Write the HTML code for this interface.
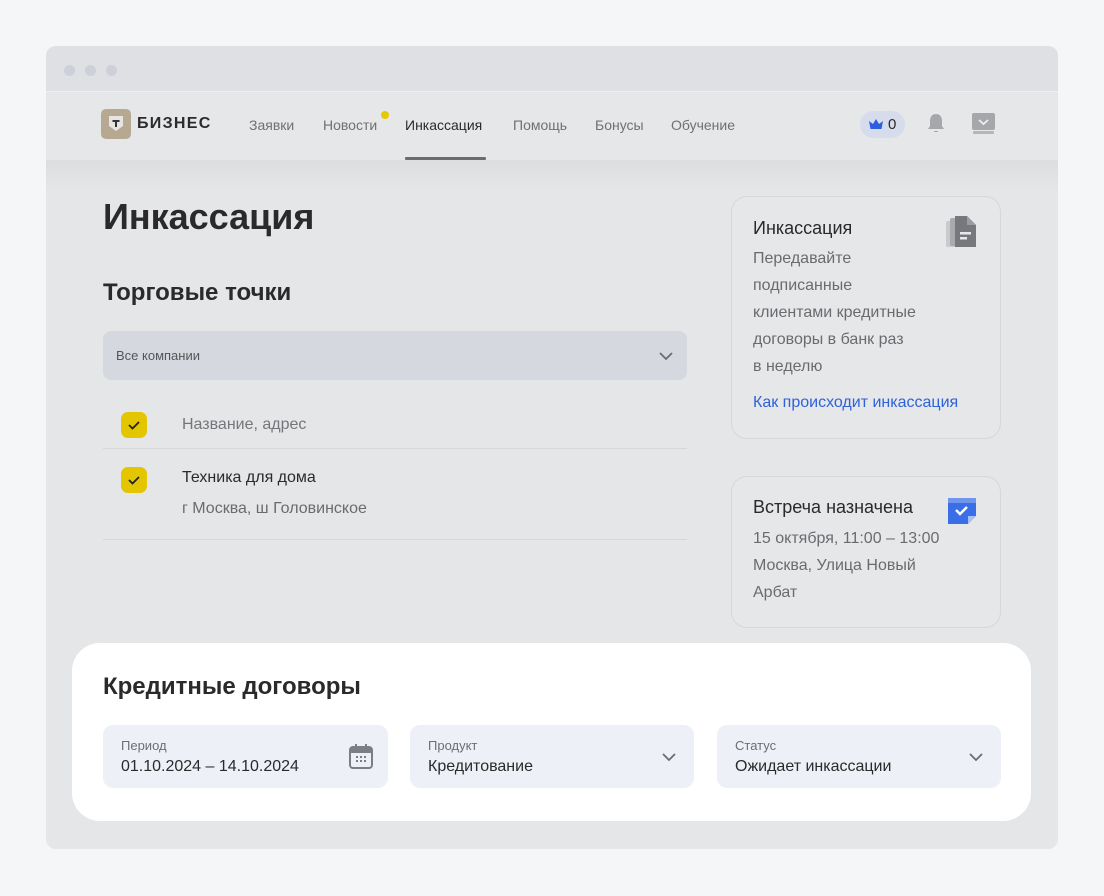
<!DOCTYPE html>
<html><head><meta charset="utf-8"><style>
*{margin:0;padding:0;box-sizing:border-box}
body{width:1104px;height:896px;background:#f5f6f8;font-family:"Liberation Sans",sans-serif;position:relative;overflow:hidden;color:#333}
.win{position:absolute;left:46px;top:46px;width:1012px;height:803px;border-radius:10px;background:#e5e6e8;overflow:hidden}
.tb{position:absolute;left:0;top:0;width:100%;height:46px;background:#dfe0e4;border-bottom:1px solid #eef0f2}
.dot{position:absolute;top:19px;width:11px;height:11px;border-radius:50%;background:#cdd0d8}
.nav{position:absolute;left:0;top:47px;width:100%;height:67px;background:#e6e7e9}
.shade{position:absolute;left:0;top:114px;width:100%;height:30px;background:linear-gradient(#dcdddf,#e5e6e8)}
.a{position:absolute;font-size:14px;color:#6f7074;top:71px}
.t{position:absolute}
.card{position:absolute;left:685px;width:270px;border:1px solid #d6d7da;border-radius:16px;background:#e6e7e9}
.ct{font-size:18px;color:#2a2a2c;position:absolute;left:21px}
.cx{font-size:16px;color:#6a6b6f;position:absolute;left:21px;line-height:27px}
.cb{position:absolute;left:18px;width:26px;height:26px;border-radius:7px;background:#e4c600}
.field{position:absolute;top:82px;height:63px;background:#edf0f6;border-radius:10px}
.fl{position:absolute;left:18px;top:13px;font-size:13px;color:#6c6e73}
.fv{position:absolute;left:18px;top:33px;font-size:16px;color:#2a2a2c}
</style></head><body>
<div class="win">
 <div class="tb"><div class="dot" style="left:18px"></div><div class="dot" style="left:39px"></div><div class="dot" style="left:60px"></div></div>
 <div class="nav"></div>
 <div class="shade"></div>
 <div class="t" style="left:55px;top:63px;width:30px;height:30px;border-radius:5px;background:#b6a891"></div>
 <svg class="t" style="left:61px;top:69px" width="18" height="18" viewBox="0 0 18 18"><path d="M2 1h14v10l-7 5-7-5z" fill="#e7e5e1"/><path d="M5.5 5h7v2h-2.5v5h-2v-5h-2.5z" fill="#333"/></svg>
 <div class="t" style="left:91px;top:69px;font-size:16px;font-weight:bold;color:#2b2b2b;letter-spacing:1.3px">БИЗНЕС</div>
 <div class="a" style="left:203px;top:71px">Заявки</div>
 <div class="a" style="left:277px">Новости</div>
 <div class="t" style="left:335px;top:65px;width:8px;height:8px;border-radius:50%;background:#e6c800"></div>
 <div class="a" style="left:359px;color:#2a2a2c">Инкассация</div>
 <div class="t" style="left:359px;top:111px;width:81px;height:3px;background:#6b6c70;border-radius:1px"></div>
 <div class="a" style="left:467px">Помощь</div>
 <div class="a" style="left:549px">Бонусы</div>
 <div class="a" style="left:625px">Обучение</div>
 <div class="t" style="left:814px;top:65px;width:45px;height:27px;border-radius:14px;background:#d6dcec"></div>
 <svg class="t" style="left:822px;top:72px" width="16" height="13" viewBox="0 0 16 13"><path d="M1 3l4 3 3-5 3 5 4-3-1.5 8h-11z" fill="#2e5ee0"/></svg>
 <div class="t" style="left:842px;top:70px;font-size:15px;color:#2a2a2c">0</div>
 <svg class="t" style="left:878px;top:66px" width="24" height="24" viewBox="0 0 24 24"><path d="M12 2c-4 0-6 3-6 7v5l-2 3h16l-2-3v-5c0-4-2-7-6-7z M10 19h4v1h-4z" fill="#a6a7ab"/></svg>
 <svg class="t" style="left:926px;top:67px" width="23" height="22" viewBox="0 0 23 22"><rect x="0" y="0" width="23" height="17" rx="2" fill="#a6a7ab"/><rect x="1" y="18" width="21" height="3" rx="1" fill="#b5b6ba"/><path d="M7 7l4.5 4 4.5-4" stroke="#eee" stroke-width="1.8" fill="none"/></svg>

 <div class="t" style="left:57px;top:150px;font-size:36px;font-weight:bold;color:#2a2a2c">Инкассация</div>
 <div class="t" style="left:57px;top:233px;font-size:24px;font-weight:bold;color:#2a2a2c">Торговые точки</div>
 <div class="t" style="left:57px;top:285px;width:584px;height:49px;border-radius:8px;background:#d5d8df"></div>
 <div class="t" style="left:70px;top:302px;font-size:13px;color:#555">Все компании</div>
 <svg class="t" style="left:612px;top:304px" width="16" height="12"><path d="M2 3l6 6 6-6" stroke="#6b6c70" stroke-width="1.8" fill="none"/></svg>
 <div class="cb" style="left:75px;top:366px"></div>
 <svg class="t" style="left:81px;top:373px" width="14" height="12"><path d="M2 6l3.5 3.5L12 3" stroke="#222" stroke-width="1.8" fill="none"/></svg>
 <div class="t" style="left:136px;top:370px;font-size:16px;color:#75767a">Название, адрес</div>
 <div class="t" style="left:57px;top:402px;width:584px;height:1px;background:#d6d7da"></div>
 <div class="cb" style="left:75px;top:421px"></div>
 <svg class="t" style="left:81px;top:428px" width="14" height="12"><path d="M2 6l3.5 3.5L12 3" stroke="#222" stroke-width="1.8" fill="none"/></svg>
 <div class="t" style="left:136px;top:423px;font-size:16px;color:#2a2a2c">Техника для дома</div>
 <div class="t" style="left:136px;top:454px;font-size:16px;color:#6a6b6f">г Москва, ш Головинское</div>
 <div class="t" style="left:57px;top:493px;width:584px;height:1px;background:#d6d7da"></div>

 <div class="card" style="top:150px;height:243px">
  <div class="ct" style="top:21px">Инкассация</div>
  <div class="cx" style="top:48px">Передавайте<br>подписанные<br>клиентами кредитные<br>договоры в банк раз<br>в неделю</div>
  <div class="t" style="left:21px;top:197px;font-size:16px;color:#2e62d9">Как происходит инкассация</div>
  <svg class="t" style="left:213px;top:18px" width="34" height="34" viewBox="0 0 34 34"><rect x="1" y="6" width="14" height="26" rx="2" fill="#c9cacd"/><rect x="5" y="3" width="14" height="28" rx="2" fill="#a9aaae"/><path d="M10 1h12l9 9v22h-21z" fill="#76787e"/><path d="M22 1v9h9z" fill="#9a9ca1"/><rect x="15" y="17" width="11" height="2.5" fill="#e8e8e8"/><rect x="15" y="22" width="7" height="2.5" fill="#e8e8e8"/></svg>
 </div>
 <div class="card" style="top:430px;height:152px">
  <div class="ct" style="top:20px">Встреча назначена</div>
  <div class="cx" style="top:48px">15 октября, 11:00 – 13:00<br>Москва, Улица Новый<br>Арбат</div>
  <svg class="t" style="left:214px;top:19px" width="32" height="30" viewBox="0 0 32 30"><path d="M2 2h28v18l-8 8h-20z" fill="#3a6ee6"/><rect x="2" y="2" width="28" height="5" fill="#6f95ef"/><path d="M22 28v-8h8z" fill="#a9c0f5"/><path d="M10 14l4 4 7-7" stroke="#fff" stroke-width="2.5" fill="none"/></svg>
 </div>

 <div class="t" style="left:26px;top:597px;width:959px;height:178px;border-radius:28px;background:#fff">
  <div class="t" style="left:31px;top:30px;font-size:24px;font-weight:bold;color:#2a2a2c">Кредитные договоры</div>
  <div class="field" style="left:31px;width:285px"><div class="fl">Период</div><div class="fv">01.10.2024 – 14.10.2024</div>
   <svg class="t" style="left:246px;top:19px" width="24" height="25" viewBox="0 0 24 25"><rect x="1" y="3" width="22" height="21" rx="3" fill="none" stroke="#7c7e84" stroke-width="2"/><rect x="1" y="3" width="22" height="6" rx="2" fill="#7c7e84"/><rect x="6" y="0" width="2" height="5" fill="#7c7e84"/><rect x="16" y="0" width="2" height="5" fill="#7c7e84"/><g fill="#7c7e84"><rect x="7" y="12" width="2" height="2"/><rect x="11" y="12" width="2" height="2"/><rect x="15" y="12" width="2" height="2"/><rect x="7" y="16" width="2" height="2"/><rect x="11" y="16" width="2" height="2"/><rect x="15" y="16" width="2" height="2"/></g></svg>
  </div>
  <div class="field" style="left:338px;width:284px"><div class="fl">Продукт</div><div class="fv">Кредитование</div>
   <svg class="t" style="left:251px;top:26px" width="16" height="12"><path d="M2 3l6 6 6-6" stroke="#6b6c70" stroke-width="1.8" fill="none"/></svg></div>
  <div class="field" style="left:645px;width:284px"><div class="fl">Статус</div><div class="fv">Ожидает инкассации</div>
   <svg class="t" style="left:251px;top:26px" width="16" height="12"><path d="M2 3l6 6 6-6" stroke="#6b6c70" stroke-width="1.8" fill="none"/></svg></div>
 </div>
</div>
</body></html>
